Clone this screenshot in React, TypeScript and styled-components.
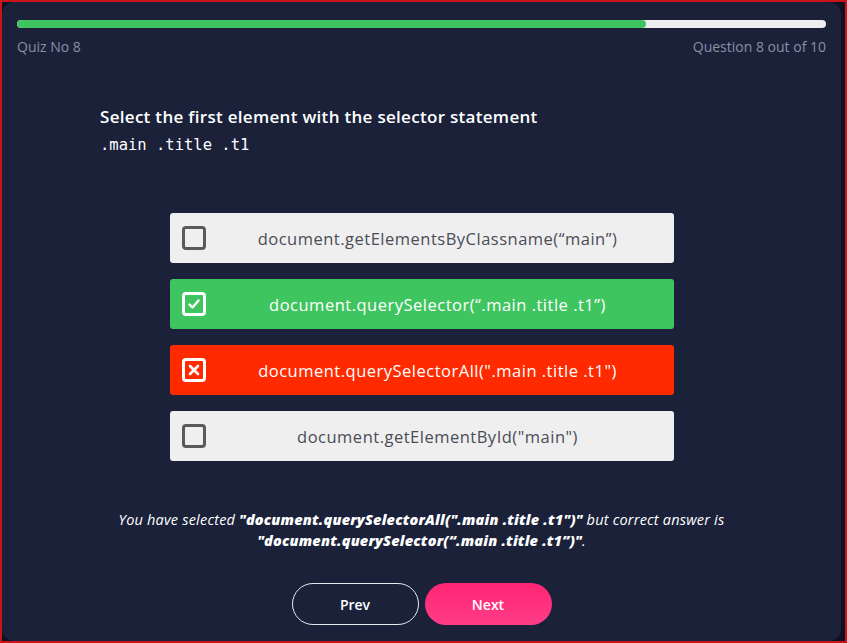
import React from "react";
import styled, { createGlobalStyle, css } from "styled-components";

const Global = createGlobalStyle`
  html, body { margin: 0; padding: 0; }
  body { background: #0e1222; font-family: "Open Sans", "Noto Sans", sans-serif; }
  * { box-sizing: border-box; }
`;

const Frame = styled.div`
  width: 847px;
  height: 643px;
  border: 2px solid #c9141a;
  background: #0e1222;
  padding: 0 4px 0 0;
  display: flex;
`;

const Card = styled.div`
  flex: 1;
  background: #1a2139;
  border-radius: 12px;
  padding: 18px 15px 0 15px;
  display: flex;
  flex-direction: column;
`;

const Track = styled.div`
  height: 8px;
  border-radius: 4px;
  background: #eeeef0;
  overflow: hidden;
`;

const Fill = styled.div`
  height: 100%;
  background: #3fc55f;
  border-radius: 4px;
`;

const Meta = styled.div`
  display: flex;
  justify-content: space-between;
  margin-top: 10px;
  font-size: 14px;
  line-height: 18px;
  color: #8a8fa5;
`;

const Question = styled.div`
  margin: 50px 0 0 83px;
  color: #fff;
`;

const Title = styled.div`
  font-size: 17px;
  font-weight: 600;
  line-height: 22px;
  letter-spacing: 0.3px;
`;

const Code = styled.div`
  font-family: "DejaVu Sans Mono", "Liberation Mono", monospace;
  font-size: 15.5px;
  line-height: 22px;
  margin-top: 6px;
`;

const Options = styled.div`
  width: 504px;
  align-self: center;
  margin-top: 57px;
  display: flex;
  flex-direction: column;
  gap: 16px;
`;

type Variant = "plain" | "correct" | "wrong";

const Option = styled.div<{ $variant: Variant }>`
  height: 50px;
  border-radius: 3px;
  display: flex;
  align-items: center;
  padding: 0 8px 0 12px;
  font-size: 16.5px;
  letter-spacing: 0.5px;
  ${(p) =>
    p.$variant === "correct"
      ? css`background: #3fc55f; color: #fff;`
      : p.$variant === "wrong"
      ? css`background: #ff2a00; color: #fff;`
      : css`background: #efeff0; color: #4a4d55;`}
`;

const Box = styled.div<{ $variant: Variant }>`
  width: 24px;
  height: 24px;
  flex: none;
  border-radius: 4px;
  border: 3px solid ${(p) => (p.$variant === "plain" ? "#5a5a5e" : "#ffffff")};
  display: flex;
  align-items: center;
  justify-content: center;
`;

const OptionText = styled.div`
  flex: 1;
  text-align: center;
  padding-left: 4px;
`;

const Feedback = styled.p`
  margin: 48px 0 0;
  text-align: center;
  color: #fff;
  font-style: italic;
  font-size: 14.5px;
  line-height: 21px;
  letter-spacing: 0.2px;
  b { font-weight: 800; }
`;

const Buttons = styled.div`
  margin-top: 32px;
  display: flex;
  justify-content: center;
  gap: 6px;
`;

const Btn = styled.button<{ $primary?: boolean }>`
  width: 127px;
  height: 42px;
  border-radius: 21px;
  font-family: inherit;
  font-size: 14px;
  font-weight: 600;
  color: #fff;
  cursor: pointer;
  ${(p) =>
    p.$primary
      ? css`border: none; background: linear-gradient(180deg, #ff2474, #ff3d86);`
      : css`border: 1px solid #e8e8ee; background: transparent;`}
`;

const Check = () => (
  <svg width="14" height="14" viewBox="0 0 14 14">
    <path d="M2.5 7.5 L5.5 10.5 L11.5 3.5" fill="none" stroke="#fff" strokeWidth="2.4" strokeLinecap="round" strokeLinejoin="round" />
  </svg>
);

const Cross = () => (
  <svg width="14" height="14" viewBox="0 0 14 14">
    <path d="M3 3 L11 11 M11 3 L3 11" fill="none" stroke="#fff" strokeWidth="2.6" strokeLinecap="round" />
  </svg>
);

const options: { text: string; variant: Variant }[] = [
  { text: "document.getElementsByClassname(\u201Cmain\u201D)", variant: "plain" },
  { text: "document.querySelector(\u201C.main .title .t1\u201D)", variant: "correct" },
  { text: "document.querySelectorAll(\".main .title .t1\")", variant: "wrong" },
  { text: "document.getElementById(\"main\")", variant: "plain" },
];

export default function App() {
  return (
    <>
      <Global />
      <Frame>
        <Card>
          <Track>
            <Fill style={{ width: `${(8 / 10) * 100 - 2.3}%` }} />
          </Track>
          <Meta>
            <span>Quiz No 8</span>
            <span>Question 8 out of 10</span>
          </Meta>
          <Question>
            <Title>Select the first element with the selector statement</Title>
            <Code>.main .title .t1</Code>
          </Question>
          <Options>
            {options.map((o) => (
              <Option key={o.text} $variant={o.variant}>
                <Box $variant={o.variant}>
                  {o.variant === "correct" && <Check />}
                  {o.variant === "wrong" && <Cross />}
                </Box>
                <OptionText>{o.text}</OptionText>
              </Option>
            ))}
          </Options>
          <Feedback>
            You have selected <b>"document.querySelectorAll(".main .title .t1")"</b> but correct answer is
            <br />
            <b>"document.querySelector(“.main .title .t1”)"</b>.
          </Feedback>
          <Buttons>
            <Btn>Prev</Btn>
            <Btn $primary>Next</Btn>
          </Buttons>
        </Card>
      </Frame>
    </>
  );
}
